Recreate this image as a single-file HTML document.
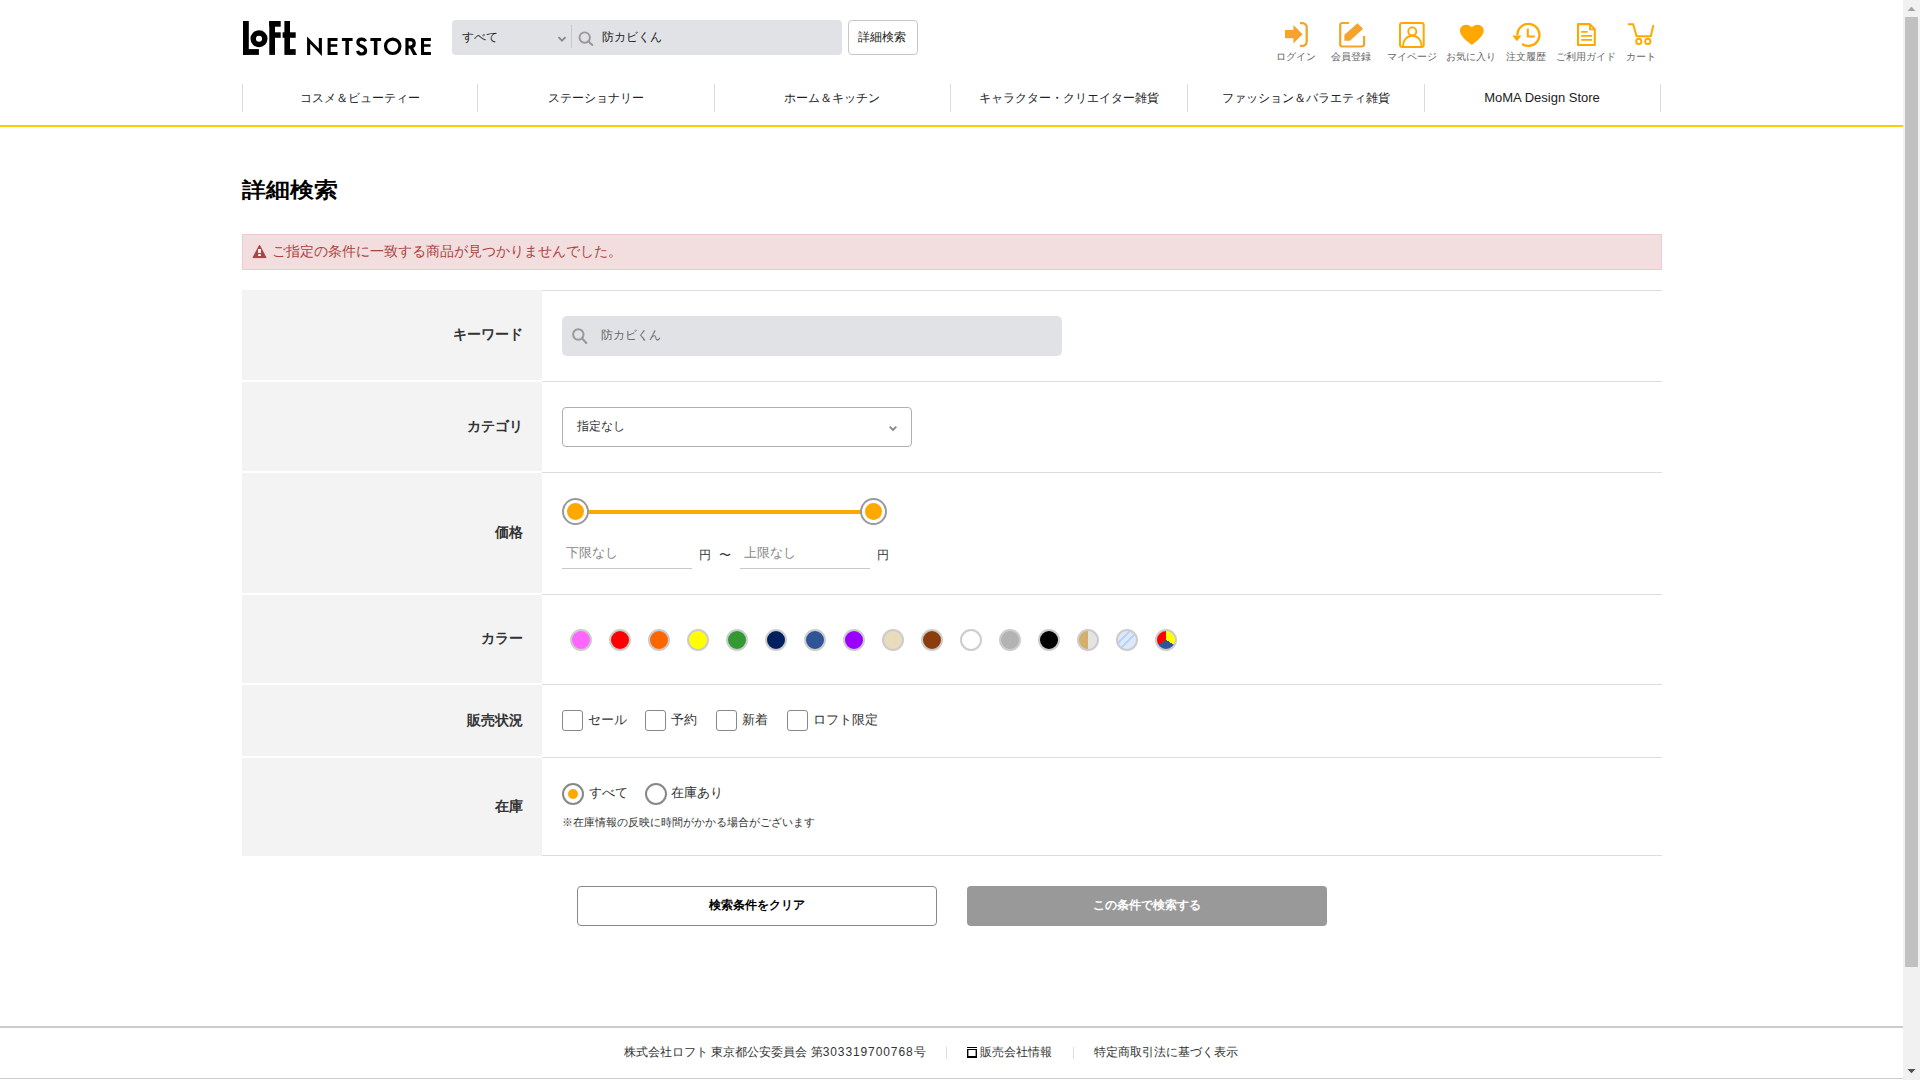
<!DOCTYPE html>
<html lang="ja">
<head>
<meta charset="utf-8">
<title>詳細検索 | ロフト公式通販サイト</title>
<style>
html,body{margin:0;padding:0;width:1920px;height:1080px;overflow:hidden;background:#fff;}
body{font-family:"Liberation Sans",sans-serif;color:#333;position:relative;}
.a{position:absolute;}
.t{position:absolute;white-space:nowrap;line-height:1;}
/* scrollbar */
#sb{left:1903px;top:0;width:17px;height:1080px;background:#f1f1f1;}
#thumb{left:1905px;top:17px;width:13px;height:950px;background:#c1c1c1;}
/* header */
#search{left:452px;top:20px;width:390px;height:35px;background:#e1e2e6;border-radius:4px;}
#dbtn{left:848px;top:20px;width:68px;height:33px;border:1px solid #c8c8c8;border-radius:4px;background:#fff;}
.nav-sep{position:absolute;top:84px;width:1px;height:28px;background:#dcdcdc;}
.navt{position:absolute;top:90px;font-size:12px;color:#222;text-align:center;width:236px;line-height:16px;}
#yline{left:0;top:125px;width:1903px;height:2px;background:#ffcc00;}
.lbl{position:absolute;font-size:10px;color:#666;text-align:center;width:70px;line-height:12px;top:51px;}
/* table */
.th{position:absolute;left:242px;width:300px;background:#f3f3f3;}
.hl{position:absolute;left:542px;width:1120px;height:1px;background:#ddd;}
.lab{position:absolute;right:1397px;font-size:14px;font-weight:bold;color:#333;line-height:16px;}
.sw{position:absolute;top:629px;width:18px;height:18px;border:2px solid #ccc;border-radius:50%;}
.cb{position:absolute;top:710px;width:19px;height:19px;border:1px solid #888;border-radius:3px;background:#fff;}
.ct{position:absolute;font-size:13px;color:#333;line-height:16px;}
</style>
</head>
<body>
<!-- ================= HEADER ================= -->
<svg class="a" style="left:0;top:0" width="1903" height="125" viewBox="0 0 1903 125">
  <!-- LoFt logo -->
  <g fill="#000">
    <rect x="243" y="21" width="5.8" height="33.9"/>
    <rect x="243" y="49.1" width="15.9" height="5.8"/>
    <circle cx="259" cy="38.7" r="5.78" fill="none" stroke="#000" stroke-width="5.45"/>
    <rect x="269.3" y="21" width="5.7" height="33.9"/>
    <rect x="269.3" y="21" width="11.4" height="5.7"/>
    <rect x="274" y="32.3" width="6.7" height="5.5"/>
    <rect x="284.4" y="21" width="5.6" height="33.9"/>
    <rect x="282.6" y="32.3" width="13.1" height="5.5"/>
    <rect x="289" y="49.1" width="6.7" height="5.8"/>
  </g>
  <!-- NETSTORE -->
  <g fill="#000">
    <polygon points="307.1,55 307.1,36.4 318.8,48.4 318.8,38 321.9,38 321.9,55.9 310.2,43.8 310.2,55"/>
    <path d="M327.6 38h9.95v2.9h-6.85v3.3h6.45v2.6h-6.45v5.2h6.85v3h-9.95z"/>
    <path d="M341.9 38h10.7v3h-3.7v14h-3.5v-14h-3.5z"/>
    <path d="M370.4 38h10.7v3h-3.7v14h-3.5v-14h-3.5z"/>
    <path d="M421 38h9.9v2.9h-6.8v3.3h6.4v2.6h-6.4v5.2h6.8v3h-9.9z"/>
    <polygon points="408.8,46.4 412.4,46.4 417.2,55 413.3,55"/>
  </g>
  <g fill="none" stroke="#000" stroke-width="3.2">
    <path d="M365.6 41.3 C364.8 39.8 363.4 39.1 361.7 39.1 C359.4 39.1 357.9 40.5 357.9 42.4 C357.9 44.6 359.6 45.4 361.9 46.3 C364.4 47.3 365.6 48.5 365.6 50.6 C365.6 52.8 363.9 54 361.7 54 C359.4 54 358 52.6 357.6 50.8"/>
    <circle cx="392.7" cy="46.3" r="7.2"/>
    <path d="M407 55V39.6h3.3c2.5 0 3.9 1.4 3.9 3.7s-1.4 3.7-3.9 3.7H407.5"/>
    
  </g>
</svg>

<div id="search" class="a"></div>
<div class="t" style="left:462px;top:30.5px;font-size:12px;color:#222;">すべて</div>
<svg class="a" style="left:556px;top:34px" width="12" height="10" viewBox="0 0 12 10"><path d="M2.5 3.2L6 6.7L9.5 3.2" fill="none" stroke="#888" stroke-width="1.8"/></svg>
<div class="a" style="left:571px;top:25px;width:1px;height:23px;background:#c8c8cc;"></div>
<svg class="a" style="left:576px;top:29px" width="20" height="20" viewBox="0 0 20 20"><circle cx="8.7" cy="8.6" r="5.2" fill="none" stroke="#999" stroke-width="1.9"/><path d="M12.5 12.4L16.3 16" stroke="#999" stroke-width="2" stroke-linecap="round"/></svg>
<div class="t" style="left:602px;top:31px;font-size:12px;color:#222;">防カビくん</div>
<div id="dbtn" class="a"></div>
<div class="t" style="left:858px;top:31px;font-size:12px;color:#222;">詳細検索</div>

<!-- header icons -->
<svg class="a" style="left:1260px;top:14px" width="420" height="40" viewBox="1260 14 420 40">
  <g fill="#f5a32b">
    <!-- login -->
    <polygon points="1285,30 1293.4,30 1293.4,25 1302.5,34.2 1293.4,43.5 1293.4,38.3 1285,38.3"/>
  </g>
  <path d="M1300 23.1h2.5a4.2 4.2 0 0 1 4.2 4.2v14.4a4.2 4.2 0 0 1-4.2 4.2H1300" fill="none" stroke="#f5a32b" stroke-width="2.3"/>
  <!-- register -->
  <path d="M1349 23H1342.5a2.3 2.3 0 0 0-2.3 2.3v18.9a2.3 2.3 0 0 0 2.3 2.3h19.3a2.3 2.3 0 0 0 2.3-2.3V36" fill="none" stroke="#f5a32b" stroke-width="2.2"/>
  <polygon points="1344.4,34.8 1357.5,23.2 1363.1,28.8 1350,40.7 1344.4,40.7" fill="#f5a32b"/>
  <!-- mypage -->
  <rect x="1400" y="22.9" width="23.7" height="24" rx="2.2" fill="none" stroke="#ffa800" stroke-width="2"/>
  <circle cx="1412.3" cy="31.4" r="4" fill="none" stroke="#ffa800" stroke-width="1.9"/>
  <path d="M1403 46.5V45.5a9.3 9.8 0 0 1 18.6 0V46.5" fill="none" stroke="#ffa800" stroke-width="1.9"/>
  <!-- heart -->
  <path d="M1471.8 44 C1469.5 42 1460.6 36.4 1460.6 30.7 C1460.6 27.7 1462.9 25.6 1465.8 25.6 C1468.4 25.6 1470.7 27 1471.8 28.9 C1472.9 27 1475.2 25.6 1477.8 25.6 C1480.7 25.6 1483 27.7 1483 30.7 C1483 36.4 1474.1 42 1471.8 44Z" fill="#ffa800" stroke="#ffa800" stroke-width="1.6" stroke-linejoin="round"/>
  <!-- history -->
  <path d="M1517.4 34.9 A11 11 0 1 1 1522.1 43.9" fill="none" stroke="#ffa800" stroke-width="2.4"/>
  <polygon points="1512.3,35.6 1521.5,35.6 1516.9,41.2" fill="#ffa800"/>
  <path d="M1527.8 28.4V36.5H1534.8" fill="none" stroke="#ffa800" stroke-width="2.1"/>
  <!-- guide -->
  <path d="M1578 24.1H1589.5L1594.8 29.2V45H1578Z" fill="none" stroke="#ffa800" stroke-width="2.1" stroke-linejoin="round"/>
  <path d="M1590 24.5V29.4H1594.5" fill="none" stroke="#ffa800" stroke-width="1.9"/>
  <path d="M1581.2 31.9H1587.6M1581.2 35.9H1592M1581.2 39.9H1592" stroke="#ffa800" stroke-width="1.8"/>
  <!-- cart -->
  <path d="M1628 24.2H1633.2L1636.6 36.2H1650.8L1653.4 25" fill="none" stroke="#ffa800" stroke-width="2" stroke-linejoin="round"/>
  <circle cx="1638.8" cy="41.4" r="2.6" fill="none" stroke="#ffa800" stroke-width="1.9"/>
  <circle cx="1647.8" cy="41.4" r="2.6" fill="none" stroke="#ffa800" stroke-width="1.9"/>
</svg>
<div class="lbl" style="left:1261px;">ログイン</div>
<div class="lbl" style="left:1316px;">会員登録</div>
<div class="lbl" style="left:1377px;">マイページ</div>
<div class="lbl" style="left:1436px;">お気に入り</div>
<div class="lbl" style="left:1491px;">注文履歴</div>
<div class="lbl" style="left:1551px;">ご利用ガイド</div>
<div class="lbl" style="left:1606px;">カート</div>

<!-- nav -->
<div class="nav-sep" style="left:242px"></div>
<div class="nav-sep" style="left:477px"></div>
<div class="nav-sep" style="left:714px"></div>
<div class="nav-sep" style="left:950px"></div>
<div class="nav-sep" style="left:1187px"></div>
<div class="nav-sep" style="left:1424px"></div>
<div class="nav-sep" style="left:1660px"></div>
<div class="navt" style="left:242px">コスメ＆ビューティー</div>
<div class="navt" style="left:478px">ステーショナリー</div>
<div class="navt" style="left:714px">ホーム＆キッチン</div>
<div class="navt" style="left:951px">キャラクター・クリエイター雑貨</div>
<div class="navt" style="left:1188px">ファッション＆バラエティ雑貨</div>
<div class="navt" style="left:1424px;font-size:13px">MoMA Design Store</div>
<div id="yline" class="a"></div>

<!-- ================= MAIN ================= -->
<div class="t" style="left:242px;top:178px;font-size:24px;font-weight:bold;color:#000;transform:scaleY(0.88);transform-origin:0 50%;">詳細検索</div>

<div class="a" style="left:242px;top:234px;width:1418px;height:34px;background:#f2dede;border:1px solid #ebccd1;"></div>
<svg class="a" style="left:252px;top:244px" width="15" height="15" viewBox="0 0 15 15"><path d="M7.5 1.2L14 13.6H1Z" fill="#a94442" stroke="#a94442" stroke-width="1" stroke-linejoin="round"/><rect x="6.1" y="5" width="2.8" height="4" fill="#fff"/><rect x="6.1" y="10.2" width="2.8" height="1.8" fill="#fff"/></svg>
<div class="t" style="left:272px;top:244px;font-size:14px;color:#a94442;">ご指定の条件に一致する商品が見つかりませんでした。</div>

<!-- table rows -->
<div class="hl" style="top:290px"></div>
<div class="th" style="top:290px;height:90px"></div>
<div class="hl" style="top:381px"></div>
<div class="th" style="top:382px;height:89px"></div>
<div class="hl" style="top:472px"></div>
<div class="th" style="top:473px;height:120px"></div>
<div class="hl" style="top:594px"></div>
<div class="th" style="top:595px;height:88px"></div>
<div class="hl" style="top:684px"></div>
<div class="th" style="top:685px;height:71px"></div>
<div class="hl" style="top:757px"></div>
<div class="th" style="top:758px;height:98px"></div>
<div class="hl" style="top:855px"></div>

<div class="lab" style="top:326px">キーワード</div>
<div class="lab" style="top:418px">カテゴリ</div>
<div class="lab" style="top:524px">価格</div>
<div class="lab" style="top:630px">カラー</div>
<div class="lab" style="top:712px">販売状況</div>
<div class="lab" style="top:798px">在庫</div>

<!-- keyword input -->
<div class="a" style="left:562px;top:316px;width:500px;height:40px;background:#e1e2e6;border-radius:5px;"></div>
<svg class="a" style="left:568px;top:324px" width="24" height="24" viewBox="568 324 24 24"><circle cx="578.3" cy="334.5" r="5.2" fill="none" stroke="#999" stroke-width="2"/><path d="M582.2 338.5L586.3 342.9" stroke="#999" stroke-width="2.2" stroke-linecap="round"/></svg>
<div class="t" style="left:601px;top:329px;font-size:12px;color:#666;">防カビくん</div>

<!-- category select -->
<div class="a" style="left:562px;top:407px;width:348px;height:38px;border:1px solid #b0b0b0;border-radius:4px;background:#fff;"></div>
<div class="t" style="left:577px;top:420px;font-size:12px;color:#333;">指定なし</div>
<svg class="a" style="left:886px;top:422px" width="14" height="12" viewBox="0 0 14 12"><path d="M3.7 4.6L7 7.9L10.3 4.6" fill="none" stroke="#888" stroke-width="1.9"/></svg>

<!-- price slider -->
<div class="a" style="left:587px;top:510px;width:274px;height:4px;background:#ffa800;"></div>
<div class="a" style="left:562px;top:498px;width:23px;height:23px;border:2px solid #999;border-radius:50%;background:#fff;"></div>
<div class="a" style="left:567px;top:503px;width:17px;height:17px;border-radius:50%;background:#ffa800;"></div>
<div class="a" style="left:860px;top:498px;width:23px;height:23px;border:2px solid #999;border-radius:50%;background:#fff;"></div>
<div class="a" style="left:865px;top:503px;width:17px;height:17px;border-radius:50%;background:#ffa800;"></div>
<div class="a" style="left:562px;top:568px;width:130px;height:1px;background:#c8c8c8;"></div>
<div class="a" style="left:740px;top:568px;width:130px;height:1px;background:#c8c8c8;"></div>
<div class="t" style="left:566px;top:546px;font-size:13px;color:#888;">下限なし</div>
<div class="t" style="left:744px;top:546px;font-size:13px;color:#888;">上限なし</div>
<div class="t" style="left:699px;top:549px;font-size:12px;color:#333;">円</div>
<div class="t" style="left:719px;top:549px;font-size:12px;color:#333;">〜</div>
<div class="t" style="left:877px;top:549px;font-size:12px;color:#333;">円</div>

<!-- color swatches -->
<div class="sw" style="left:570px;background:#ff66ff"></div>
<div class="sw" style="left:609px;background:#ff0000"></div>
<div class="sw" style="left:648px;background:#ff6600"></div>
<div class="sw" style="left:687px;background:#ffff00"></div>
<div class="sw" style="left:726px;background:#339933"></div>
<div class="sw" style="left:765px;background:#001f5f"></div>
<div class="sw" style="left:804px;background:#2f5597"></div>
<div class="sw" style="left:843px;background:#9900ff"></div>
<div class="sw" style="left:882px;background:#e8dcbc"></div>
<div class="sw" style="left:921px;background:#8b3d0d"></div>
<div class="sw" style="left:960px;background:#ffffff"></div>
<div class="sw" style="left:999px;background:#b3b3b3"></div>
<div class="sw" style="left:1038px;background:#000000"></div>
<div class="sw" style="left:1077px;background:linear-gradient(90deg,#d4ae6a 50%,#e4e4e4 50%)"></div>
<div class="sw" style="left:1116px;background:linear-gradient(135deg,#dde9fb 0%,#dde9fb 30%,#b9d2f5 30%,#b9d2f5 38%,#dde9fb 38%,#dde9fb 52%,#b9d2f5 52%,#b9d2f5 60%,#dde9fb 60%)"></div>
<div class="sw" style="left:1155px;background:conic-gradient(#ffff00 0deg 120deg,#2f5597 120deg 240deg,#ff0000 240deg 360deg)"></div>

<!-- checkboxes -->
<div class="cb" style="left:562px"></div>
<div class="ct" style="left:588px;top:712px">セール</div>
<div class="cb" style="left:645px"></div>
<div class="ct" style="left:671px;top:712px">予約</div>
<div class="cb" style="left:716px"></div>
<div class="ct" style="left:742px;top:712px">新着</div>
<div class="cb" style="left:787px"></div>
<div class="ct" style="left:813px;top:712px">ロフト限定</div>

<!-- radios -->
<div class="a" style="left:562px;top:783px;width:18px;height:18px;border:2px solid #888;border-radius:50%;background:#fff;"></div>
<div class="a" style="left:568px;top:789px;width:10px;height:10px;border-radius:50%;background:#ffa800;"></div>
<div class="ct" style="left:589px;top:785px">すべて</div>
<div class="a" style="left:645px;top:783px;width:18px;height:18px;border:2px solid #888;border-radius:50%;background:#fff;"></div>
<div class="ct" style="left:671px;top:785px">在庫あり</div>
<div class="t" style="left:562px;top:817px;font-size:11px;color:#333;">※在庫情報の反映に時間がかかる場合がございます</div>

<!-- buttons -->
<div class="a" style="left:577px;top:886px;width:358px;height:38px;border:1px solid #888;border-radius:4px;background:#fff;"></div>
<div class="t" style="left:577px;top:897px;width:360px;text-align:center;font-size:12px;font-weight:bold;color:#000;line-height:16px;">検索条件をクリア</div>
<div class="a" style="left:967px;top:886px;width:360px;height:40px;border-radius:4px;background:#999;"></div>
<div class="t" style="left:967px;top:897px;width:360px;text-align:center;font-size:12px;font-weight:bold;color:#fff;line-height:16px;">この条件で検索する</div>

<!-- footer -->
<div class="a" style="left:0;top:1026px;width:1903px;height:2px;background:#ccc;"></div>
<div class="a" style="left:0;top:1078px;width:1903px;height:1px;background:#ccc;"></div>
<div class="t" style="left:624px;top:1045px;font-size:12px;color:#333;line-height:14px;">株式会社ロフト 東京都公安委員会 第<span style="letter-spacing:0.9px">303319700768</span>号</div>
<div class="a" style="left:946px;top:1047px;width:1px;height:12px;background:#ddd;"></div>
<svg class="a" style="left:966px;top:1046px" width="12" height="14" viewBox="0 0 12 14"><rect x="1" y="1" width="10" height="1" fill="#000"/><rect x="1" y="3" width="10" height="1" fill="#000"/><rect x="1" y="3" width="1.4" height="9" fill="#000"/><rect x="9.6" y="3" width="1.4" height="9" fill="#000"/><rect x="1" y="10" width="10" height="2" fill="#000"/></svg>
<div class="t" style="left:980px;top:1045px;font-size:12px;color:#333;line-height:14px;">販売会社情報</div>
<div class="a" style="left:1073px;top:1047px;width:1px;height:12px;background:#ddd;"></div>
<div class="t" style="left:1094px;top:1045px;font-size:12px;color:#333;line-height:14px;">特定商取引法に基づく表示</div>

<!-- scrollbar -->
<div id="sb" class="a"></div>
<div id="thumb" class="a"></div>
<svg class="a" style="left:1903px;top:0" width="17" height="17" viewBox="0 0 17 17"><polygon points="4.5,11 12.5,11 8.5,6.8" fill="#a3a3a3"/></svg>
<svg class="a" style="left:1903px;top:1063px" width="17" height="17" viewBox="0 0 17 17"><polygon points="4.5,6 12.5,6 8.5,10.2" fill="#505050"/></svg>

</body>
</html>
